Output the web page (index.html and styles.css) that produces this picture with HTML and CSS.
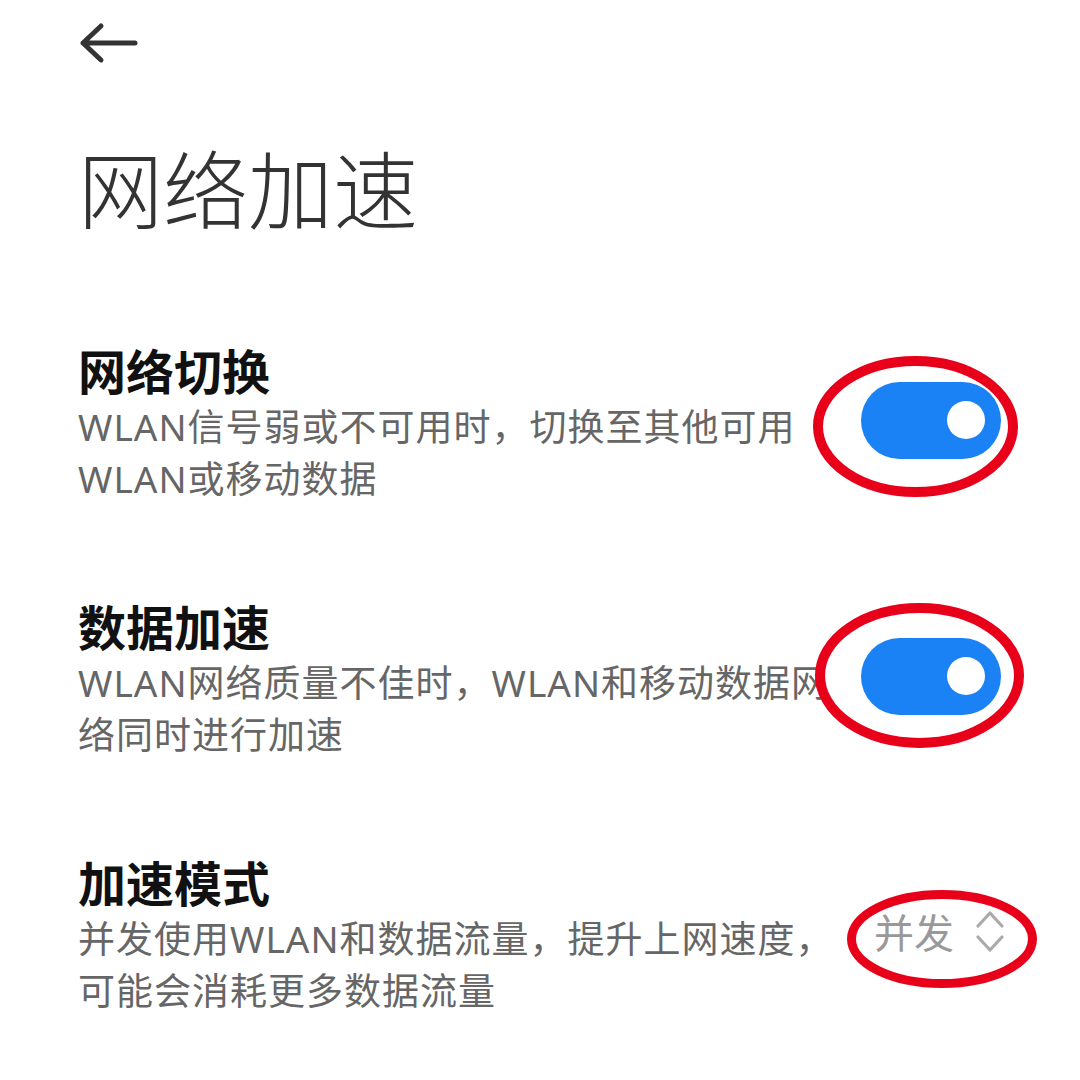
FILE: index.html
```html
<!DOCTYPE html>
<html lang="zh-CN">
<head>
<meta charset="utf-8">
<title>网络加速</title>
<link rel="stylesheet" href="styles.css">
</head>
<body>
<div class="page">
  <header class="topbar">
    <svg class="back" width="62" height="48" viewBox="0 0 62 48" aria-label="返回">
      <path d="M23 7 L5 24 L23 41 M5 24 H57" fill="none" stroke="#333" stroke-width="5" stroke-linecap="round" stroke-linejoin="round"/>
    </svg>
  </header>
  <h1 class="title">网络加速</h1>
  <div class="list">
    <div class="item">
      <div class="text">
        <div class="item-title">网络切换</div>
        <div class="item-desc">WLAN信号弱或不可用时，切换至其他可用<br>WLAN或移动数据</div>
      </div>
      <div class="toggle"><span class="knob"></span></div>
    </div>
    <div class="item">
      <div class="text">
        <div class="item-title">数据加速</div>
        <div class="item-desc">WLAN网络质量不佳时，WLAN和移动数据网<br>络同时进行加速</div>
      </div>
      <div class="toggle"><span class="knob"></span></div>
    </div>
    <div class="item">
      <div class="text">
        <div class="item-title">加速模式</div>
        <div class="item-desc">并发使用WLAN和数据流量，提升上网速度，<br>可能会消耗更多数据流量</div>
      </div>
      <div class="select">
        <span class="select-value">并发</span>
        <svg class="chevrons" width="28" height="46" viewBox="0 0 28 46">
          <path d="M2 18 L14 5 L26 18 M2 29 L14 42 L26 29" fill="none" stroke="#aaa" stroke-width="3.2" stroke-linecap="round" stroke-linejoin="round"/>
        </svg>
      </div>
    </div>
  </div>
  <svg class="annotations" width="1080" height="1080" viewBox="0 0 1080 1080">
    <ellipse cx="915.5" cy="426.5" rx="97.5" ry="65.5" fill="none" stroke="#e8001a" stroke-width="10"/>
    <ellipse cx="919.5" cy="675.5" rx="99.5" ry="67.5" fill="none" stroke="#e8001a" stroke-width="10"/>
    <ellipse cx="942" cy="939" rx="90.5" ry="44.5" fill="none" stroke="#e8001a" stroke-width="9"/>
  </svg>
</div>
</body>
</html>
```

FILE: styles.css
```css
* { box-sizing: border-box; }
html, body { margin: 0; padding: 0; background: #fff; }
body {
  font-family: "Noto Sans", "Noto Sans CJK SC", sans-serif;
}
.page {
  position: relative;
  width: 1080px;
  height: 1080px;
  overflow: hidden;
  padding: 0 79px 0 78px;
}
.topbar {
  padding-top: 19px;
  height: 68px;
}
.back { display: block; }
.title {
  margin: 68px 0 0 0;
  font-family: "Noto Sans CJK SC", sans-serif;
  font-weight: 300;
  font-size: 85px;
  line-height: 100px;
  color: #333;
}
.list {
  margin-top: 112px;
  display: flex;
  flex-direction: column;
  gap: 99px;
}
.item {
  display: flex;
  align-items: center;
}
.text {
  flex: 1;
  min-width: 0;
  white-space: nowrap;
}
.item-title {
  font-family: "Noto Sans CJK SC", sans-serif;
  font-weight: 700;
  font-size: 48px;
  line-height: 42px;
  color: #111;
}
.item-desc {
  margin-top: 11px;
  font-size: 37px;
  line-height: 52px;
  letter-spacing: 1px;
  color: #666;
}
.toggle {
  flex: none;
  width: 140px;
  height: 77px;
  border-radius: 39px;
  background: #1b82f6;
  display: flex;
  align-items: center;
  justify-content: flex-end;
  padding-right: 16px;
  margin-bottom: 13px;
}
.knob {
  width: 38px;
  height: 38px;
  border-radius: 50%;
  background: #fff;
}
.select {
  flex: none;
  display: flex;
  align-items: center;
  gap: 22px;
  margin-right: -3px;
  margin-bottom: 15px;
}
.select-value {
  font-family: "Noto Sans CJK SC", sans-serif;
  font-size: 40px;
  line-height: 48px;
  color: #999;
}
.chevrons { display: block; }
.annotations {
  position: absolute;
  left: 0;
  top: 0;
  pointer-events: none;
}
```
